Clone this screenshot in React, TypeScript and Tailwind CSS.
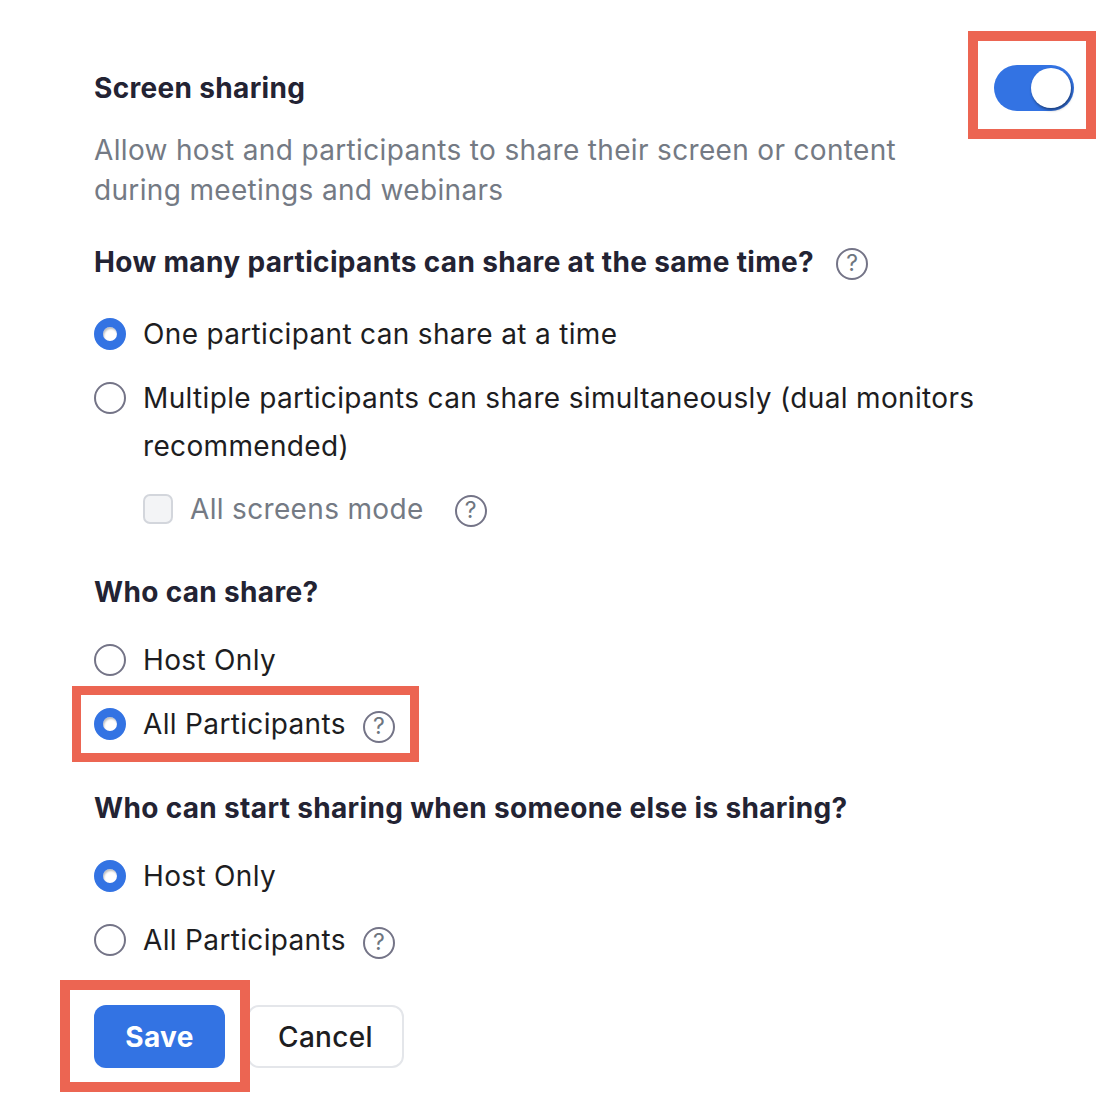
import type { ReactNode } from "react";

// Zoom-style screen sharing settings panel with red callout boxes.

function Help() {
  return (
    <span className="flex h-[32px] w-[32px] shrink-0 items-center justify-center rounded-full border-2 border-[#747487] pb-[1px] text-[23px] font-normal leading-none tracking-normal text-[#6e7680]">
      ?
    </span>
  );
}

function Radio({ checked }: { checked?: boolean }) {
  return checked ? (
    <span className="h-[32px] w-[32px] shrink-0 rounded-full border-[9px] border-[#3373e3] bg-white shadow-[inset_1px_2px_2px_rgba(0,0,0,0.25)]" />
  ) : (
    <span className="h-[32px] w-[32px] shrink-0 rounded-full border-2 border-[#747487] bg-white" />
  );
}

function Option({
  checked,
  help,
  children,
}: {
  checked?: boolean;
  help?: boolean;
  children: ReactNode;
}) {
  return (
    <div className="flex items-start">
      <div className="flex h-[48px] items-center">
        <Radio checked={checked} />
      </div>
      <div className="ml-[17px] flex items-center text-[28px] leading-[48px] text-[#1d1d21]">
        <span>{children}</span>
        {help && (
          <span className="ml-[17px] mt-[6px]">
            <Help />
          </span>
        )}
      </div>
    </div>
  );
}

function Callout({ className }: { className: string }) {
  return <div className={`pointer-events-none absolute border-[#ec6552] ${className}`} />;
}

export default function App() {
  return (
    <div
      className="h-[1102px] w-[1096px] overflow-hidden bg-white pl-[94px] pt-[70px] tracking-[0.021em]"
      style={{ fontFamily: "Inter, 'Noto Sans', sans-serif" }}
    >
      <div className="flex h-[36px] items-center justify-between pr-[22px]">
        <h2 className="text-[28px] font-bold leading-[36px] text-[#232333]">Screen sharing</h2>
        <div className="relative">
          <div className="flex h-[46px] w-[80px] items-center justify-end rounded-full bg-[#3373e3] pr-[3px]">
            <span className="h-[40px] w-[40px] rounded-full bg-white shadow-[1px_2px_3px_rgba(0,0,0,0.45)]" />
          </div>
          <Callout className="-bottom-[28px] -left-[26px] -right-[22px] -top-[34px] border-[10px]" />
        </div>
      </div>

      <p className="mt-[24px] w-[820px] text-[28px] leading-[40px] text-[#747a84]">
        Allow host and participants to share their screen or content during meetings and webinars
      </p>

      <div className="mt-[34px] flex h-[36px] items-center">
        <h3 className="text-[28px] font-bold leading-[36px] text-[#232333]">
          How many participants can share at the same time?
        </h3>
        <span className="ml-[22px] mt-[4px]">
          <Help />
        </span>
      </div>

      <div className="mt-[30px] flex flex-col gap-[16px]">
        <Option checked>One participant can share at a time</Option>
        <div className="w-[910px]">
          <Option>Multiple participants can share simultaneously (dual monitors recommended)</Option>
        </div>
      </div>

      <div className="ml-[49px] mt-[15px] flex h-[48px] items-center">
        <span className="h-[30px] w-[30px] rounded-[7px] border-2 border-[#d3d6dc] bg-[#f3f4f6]" />
        <span className="ml-[17px] text-[28px] text-[#747a84]">All screens mode</span>
        <span className="ml-[31px] mt-[4px]">
          <Help />
        </span>
      </div>

      <h3 className="mt-[41px] text-[28px] font-bold leading-[36px] text-[#232333]">Who can share?</h3>

      <div className="mt-[26px] flex flex-col gap-[16px]">
        <Option>Host Only</Option>
        <div className="relative self-start">
          <Option checked help>
            All Participants
          </Option>
          <Callout className="-bottom-[14px] -left-[22px] -right-[24px] -top-[14px] border-[9px]" />
        </div>
      </div>

      <h3 className="mt-[42px] text-[28px] font-bold leading-[36px] text-[#232333]">
        Who can start sharing when someone else is sharing?
      </h3>

      <div className="mt-[26px] flex flex-col gap-[16px]">
        <Option checked>Host Only</Option>
        <Option help>All Participants</Option>
      </div>

      <div className="mt-[41px] flex items-center gap-[22px]">
        <div className="relative">
          <button className="h-[63px] w-[131px] rounded-[12px] bg-[#3373e3] text-[28px] font-bold text-white">
            Save
          </button>
          <Callout className="-bottom-[24px] -left-[34px] -right-[25px] -top-[25px] border-[10px]" />
        </div>
        <button className="h-[63px] w-[157px] rounded-[12px] border-2 border-[#e4e6ea] bg-white text-[28px] font-medium text-[#1d1d21]">
          Cancel
        </button>
      </div>
    </div>
  );
}
